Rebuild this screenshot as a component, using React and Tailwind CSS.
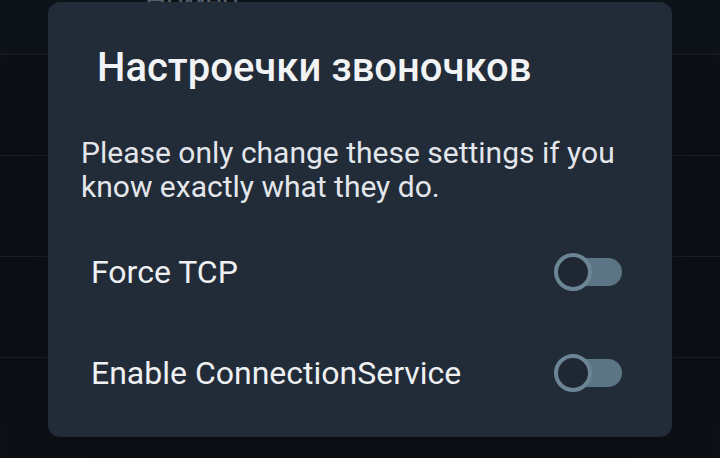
import React, { useState } from 'react';

const Toggle = ({ on, onChange }) => (
  <button
    type="button"
    onClick={onChange}
    className="relative flex h-[40px] w-[68px] items-center outline-none"
  >
    <span className="absolute right-0 h-[28px] w-[56px] rounded-full bg-[#5c7585]" />
    <span
      className={`absolute h-[38px] w-[38px] rounded-full border-[4px] border-[#6b8595] bg-[#1f2733] ${
        on ? 'right-0' : 'left-0'
      }`}
    />
  </button>
);

const App = () => {
  const [forceTcp, setForceTcp] = useState(false);
  const [connService, setConnService] = useState(false);

  return (
    <div
      className="relative h-[458px] w-[720px] overflow-hidden bg-[#0c1015]"
      style={{ fontFamily: 'Roboto, "Noto Sans", sans-serif' }}
    >
      {/* список настроек под диалогом (затемнён) */}
      <div className="flex flex-col">
        <div className="h-[55px] border-b border-[#1a1f26] bg-[#0e131a] pl-[145px]">
          <span className="block -translate-y-[17px] text-[30px] leading-[36px] text-[#5a6069]">Номер</span>
        </div>
        <div className="h-[101px] border-b border-[#1a1f26]" />
        <div className="h-[101px] border-b border-[#1a1f26]" />
        <div className="h-[101px] border-b border-[#1a1f26]" />
      </div>

      {/* диалог */}
      <div className="absolute left-[48px] top-[2px] flex h-[435px] w-[624px] flex-col rounded-[12px] bg-[#222b38] shadow-2xl">
        <h2 className="pl-[49px] pt-[46px] text-[40px] font-medium leading-[40px] text-[#f1f3f5]">
          Настроечки звоночков
        </h2>
        <p className="mt-[48px] pl-[33px] pr-[40px] text-[30px] leading-[34px] text-[#e3e6ea]">
          Please only change these settings if you know exactly what they do.
        </p>

        <div className="mt-[17px] flex flex-col">
          <div className="flex h-[101px] items-center justify-between pl-[43px] pr-[50px]">
            <span className="text-[32px] text-[#eef0f2]">Force TCP</span>
            <Toggle on={forceTcp} onChange={() => setForceTcp(!forceTcp)} />
          </div>
          <div className="flex h-[101px] items-center justify-between pl-[43px] pr-[50px]">
            <span className="text-[32px] text-[#eef0f2]">Enable ConnectionService</span>
            <Toggle on={connService} onChange={() => setConnService(!connService)} />
          </div>
        </div>
      </div>
    </div>
  );
};

export default App;
